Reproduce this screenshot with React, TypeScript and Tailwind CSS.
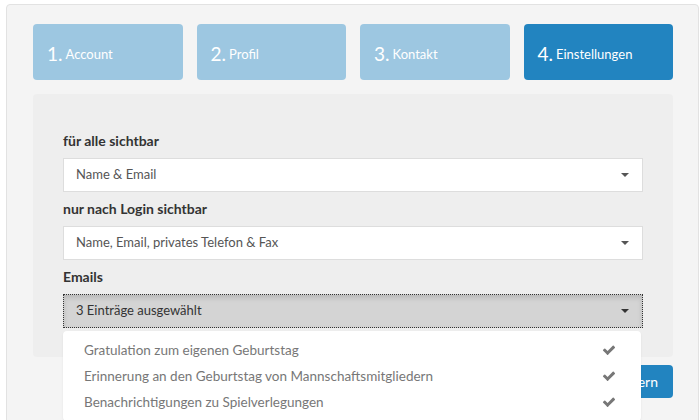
const font = { fontFamily: "Lato, 'Noto Sans', sans-serif" };

const steps = [
  { n: "1.", label: "Account", active: false },
  { n: "2.", label: "Profil", active: false },
  { n: "3.", label: "Kontakt", active: false },
  { n: "4.", label: "Einstellungen", active: true },
];

const emailOptions = [
  "Gratulation zum eigenen Geburtstag",
  "Erinnerung an den Geburtstag von Mannschaftsmitgliedern",
  "Benachrichtigungen zu Spielverlegungen",
];

function Caret({ dark }: { dark?: boolean }) {
  return (
    <span
      className={
        "ml-auto h-0 w-0 border-x-[4px] border-t-[4px] border-x-transparent " +
        (dark ? "border-t-[#333]" : "border-t-[#555]")
      }
    />
  );
}

function Check() {
  return (
    <svg viewBox="0 0 1792 1792" className="h-[14px] w-[14px]" fill="#777">
      <path d="M1671 566q0 40-28 68l-724 724-136 136q-28 28-68 28t-68-28l-136-136-362-362q-28-28-28-68t28-68l136-136q28-28 68-28t68 28l294 295 656-657q28-28 68-28t68 28l136 136q28 28 28 68z" />
    </svg>
  );
}

function Label({ children }: { children: string }) {
  return <div className="mt-[7px] h-[20px] text-[14px] font-bold leading-[20px] text-[#333]">{children}</div>;
}

function Field({ label, value }: { label: string; value: string }) {
  return (
    <div>
      <Label>{label}</Label>
      <div className="mt-[7px] flex h-[34px] items-center border border-[#dddddd] bg-white pl-[12px] pr-[13px] text-[13px] text-[#555]">
        <span>{value}</span>
        <Caret />
      </div>
    </div>
  );
}

export default function App() {
  return (
    <div className="h-[420px] overflow-hidden bg-white pl-[6px] pr-[1px] pt-[4px]" style={font}>
      <div className="h-[440px] rounded-t-[4px] border border-[#e2e2e2] bg-[#f4f4f4] pl-[26px] pr-[25px] pt-[19px]">
        <div className="flex gap-[14px]">
          {steps.map((s) => (
            <div
              key={s.n}
              className={
                "flex h-[56px] flex-1 items-center rounded-[4px] pl-[14px] pt-[5px] text-white " +
                (s.active ? "bg-[#2284c0]" : "bg-[#9dc7e1]")
              }
            >
              <span className="text-[19px]">{s.n}</span>
              <span className="ml-[3px] text-[13px]">{s.label}</span>
            </div>
          ))}
        </div>

        <div className="relative mt-[14px]">
          <div className="rounded-[4px] bg-[#eeeeee] px-[30px] pb-[29px] pt-[30px]">
            <Field label="für alle sichtbar" value="Name & Email" />
            <Field label="nur nach Login sichtbar" value="Name, Email, privates Telefon & Fax" />
            <div>
              <Label>Emails</Label>
              <div className="mt-[7px] flex h-[34px] items-center border border-dotted border-[#333] bg-[#d4d4d4] pl-[12px] pr-[13px] text-[13px] text-[#333] shadow-[inset_0_3px_5px_rgba(0,0,0,0.125)]">
                <span>3 Einträge ausgewählt</span>
                <Caret dark />
              </div>
            </div>
          </div>

          <div className="mt-[8px] flex justify-end">
            <button className="h-[33px] rounded-[4px] bg-[#2284c0] px-[15px] text-[14px] text-white">
              Speichern
            </button>
          </div>

          <div className="absolute left-[30px] top-[237px] w-[578px] rounded-[4px] bg-white py-[6px] shadow-[0_1px_2px_rgba(0,0,0,0.08)]">
            {emailOptions.map((o) => (
              <div key={o} className="flex h-[26px] items-center pl-[21px] pr-[25px] text-[13.5px] text-[#777]">
                <span>{o}</span>
                <span className="ml-auto">
                  <Check />
                </span>
              </div>
            ))}
          </div>
        </div>
      </div>
    </div>
  );
}
